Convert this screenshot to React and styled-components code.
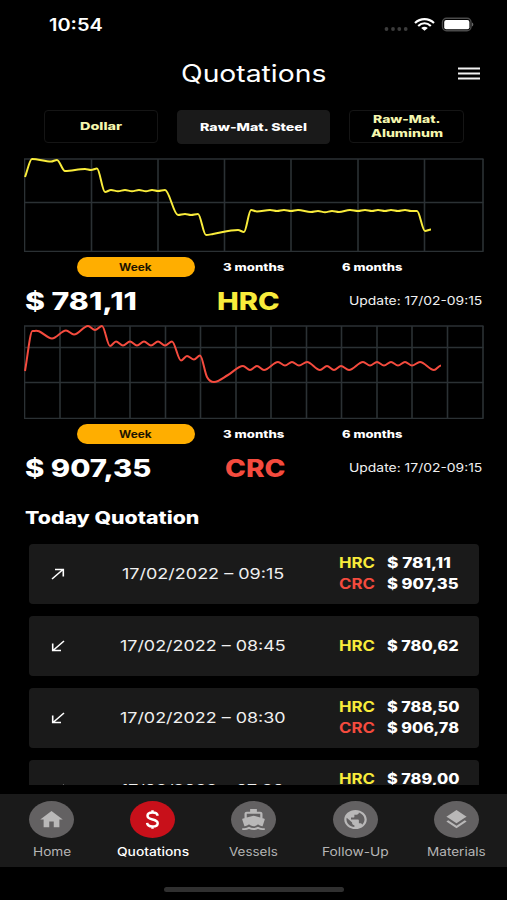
import React, { useLayoutEffect, useRef } from 'react';
import styled, { createGlobalStyle, css } from 'styled-components';
import { MdHome, MdDirectionsBoat, MdPublic, MdLayers } from 'react-icons/md';

const GlobalStyle = createGlobalStyle`
  * {
    box-sizing: border-box;
  }

  body {
    margin: 0;
    background: #000;
    font-family: Inter, 'Liberation Sans', sans-serif;
    color: #fff;
  }
`;

const Screen = styled.div`
  display: flex;
  flex-direction: column;
  width: 507px;
  height: 900px;
  overflow: hidden;
  background: #000;
`;

const FitBox = styled.span`
  display: block;
  flex: none;
  width: ${({ $width }) => $width}px;
  white-space: nowrap;
  text-align: left;
  line-height: 1;
  font-size: ${({ $size }) => $size}px;
  font-weight: ${({ $weight }) => $weight};
  color: ${({ $color }) => $color};
`;

const FitInner = styled.span`
  display: inline-block;
  transform-origin: 0 50%;
`;

// Stretches a line of text sideways until it fills the given width
const FitText = ({ width, size, weight = 400, color = '#fff', children }) => {
  const inner = useRef(null);

  useLayoutEffect(() => {
    const fit = () => {
      const el = inner.current;
      if (el) el.style.transform = `scaleX(${width / el.offsetWidth})`;
    };
    fit();
    document.fonts?.ready.then(fit);
  }, [width, children]);

  return (
    <FitBox $width={width} $size={size} $weight={weight} $color={color}>
      <FitInner ref={inner}>{children}</FitInner>
    </FitBox>
  );
};

const StatusBar = styled.div`
  display: flex;
  align-items: center;
  justify-content: space-between;
  height: 48px;
  padding: 2px 31px 0 49px;
`;

const StatusIcons = styled.div`
  display: flex;
  align-items: center;
`;

const Header = styled.header`
  display: grid;
  grid-template-columns: 1fr auto 1fr;
  align-items: center;
  height: 51px;
  padding: 0 27px 0 26px;
`;

const MenuButton = styled.button`
  display: flex;
  justify-self: end;
  padding: 0;
  border: 0;
  background: none;
`;

const Tabs = styled.nav`
  display: flex;
  align-items: flex-start;
  gap: 19px;
  height: 59px;
  padding: 11px 43px 0 43.5px;
`;

const Tab = styled.button`
  display: flex;
  flex-direction: column;
  align-items: center;
  justify-content: center;
  gap: 3px;
  width: 115px;
  height: 33px;
  padding: 0;
  border: 1px solid #151515;
  border-radius: 4px;
  background: #000;
  font-family: inherit;

  ${({ $active }) => $active && css`
    width: 153px;
    height: 34px;
    border-color: #1a1a1a;
    background: #1a1a1a;
  `}
`;

const Quote = styled.section`
  height: 167px;
  padding-left: 24px;
`;

const Chart = styled.svg`
  display: block;
  fill: none;
`;

const Periods = styled.div`
  display: flex;
  height: 20px;
  margin: 5px 0 0 52.5px;
`;

const Period = styled.button`
  display: flex;
  align-items: center;
  justify-content: center;
  width: 118.5px;
  height: 20px;
  padding: 0;
  border: 0;
  border-radius: 10px;
  background: ${({ $active }) => ($active ? '#ffae00' : 'transparent')};
  font-family: inherit;
`;

const PriceRow = styled.div`
  display: grid;
  grid-template-columns: 192px 1fr auto;
  align-items: center;
  height: 48px;
  padding: 2px 25px 0 1px;
`;

const Symbol = styled.div`
  padding-left: ${({ $indent }) => $indent}px;
`;

const ListTitle = styled.h2`
  display: flex;
  align-items: center;
  height: 51.5px;
  margin: 0;
  padding: 2px 0 0 24.5px;
`;

const List = styled.div`
  display: flex;
  flex-direction: column;
  gap: 11.5px;
  height: 241.5px;
  padding: 0 28.5px 0 29px;
  overflow: hidden;
`;

const Card = styled.article`
  display: grid;
  grid-template-columns: 57px 1fr 139px;
  align-items: center;
  flex: none;
  height: 60.5px;
  border-radius: 4px;
  background: #1a1a1a;
`;

const CardArrow = styled.svg`
  display: block;
  margin-left: 22px;
  fill: none;
  stroke: #fff;
  stroke-width: 1.6;
`;

const CardDate = styled.div`
  display: flex;
  justify-content: center;
  padding-right: 20px;
`;

const CardPrices = styled.div`
  display: flex;
  flex-direction: column;
  gap: 7px;
  margin-left: -0.5px;
`;

const CardPrice = styled.div`
  display: flex;
  gap: 12px;
`;

const BottomNav = styled.nav`
  display: grid;
  grid-template-columns: repeat(5, 101.2px);
  height: 73px;
  margin-top: 9px;
  padding-left: 1px;
  background: #1a1a1a;
`;

const NavItem = styled.a`
  display: flex;
  flex-direction: column;
  align-items: center;
  gap: 9px;
  padding-top: 6.5px;
`;

const NavIcon = styled.span`
  display: flex;
  align-items: center;
  justify-content: center;
  width: 45px;
  height: 37px;
  border-radius: 50%;
  background: ${({ $active }) => ($active ? '#c8101a' : '#636162')};
  color: #b9b8b8;

  svg {
    width: 27px;
    height: 23px;
  }
`;

const HomeIndicator = styled.div`
  width: 180px;
  height: 5px;
  margin: 20px auto 0;
  border-radius: 3px;
  background: #303030;
`;

const SERIES = {
  HRC: {
    color: '#f9ec3b',
    columns: [0.5, 67.5, 134, 200.5, 267, 334, 400.5, 459],
    rows: [1, 44.5, 93.5],
    points: [[1, 19], [8, 1], [27, 3.6], [33, 2], [41, 13], [61, 11], [67, 12], [73, 10.5], [81, 34], [87, 32], [94, 33.2], [101, 32], [108, 33.2], [115, 32], [122, 33.2], [128, 32], [134, 33], [141, 32], [154, 57], [161, 56], [167, 57], [174, 56], [182, 77], [189, 76], [214, 72], [220, 74], [227, 52], [233, 53.5], [246, 52], [253, 53], [260, 52], [267, 53], [274, 52], [287, 54], [294, 53], [301, 54.2], [308, 53], [315, 54], [326, 52], [334, 53], [341, 52], [348, 53], [354, 52], [361, 53], [367, 52], [374, 53], [381, 52], [387, 53], [393, 53], [401, 73], [407, 71.5]],
  },
  CRC: {
    color: '#f54b3e',
    columns: [0.5, 36, 71, 106, 141.5, 176.5, 212, 247, 282.5, 317.5, 353, 388, 423.5, 459],
    rows: [1, 22.5, 57.5, 93.5],
    points: [[1, 46], [8.5, 6], [15, 6.2], [28, 13.5], [42, 5.5], [50, 9.5], [64, 1], [71, 5], [78, 1], [86, 21], [92, 16.5], [99, 20.5], [106, 16.5], [113, 20.5], [120, 16.5], [127, 20.5], [134, 16.5], [141, 20.5], [148, 16.5], [157, 35.5], [163, 31], [170, 34.5], [176, 30.5], [183, 52], [190, 57], [204, 50], [219, 41], [226, 45], [233, 41], [240, 45], [254, 37], [261, 40.5], [268, 37], [275, 40.5], [283, 37], [296, 45], [303, 41], [310, 45], [317, 41], [325, 45], [339, 37], [346, 40.5], [353, 37], [360, 40.5], [367, 37], [374, 40.5], [381, 37], [388, 40.5], [396, 37], [410, 45], [417, 40.5]],
  },
};

const PERIODS = [
  { label: 'Week', width: 33 },
  { label: '3 months', width: 62 },
  { label: '6 months', width: 61 },
];

const QUOTES = [
  { symbol: 'HRC', price: '$ 781,11', width: 112, symbolWidth: 63, indent: 0 },
  { symbol: 'CRC', price: '$ 907,35', width: 127, symbolWidth: 61, indent: 8 },
];

const HISTORY = [
  { up: true, date: '17/02/2022 – 09:15', dateWidth: 162, prices: [['HRC', '$ 781,11', 64], ['CRC', '$ 907,35', 71]] },
  { date: '17/02/2022 – 08:45', dateWidth: 165, prices: [['HRC', '$ 780,62', 72]] },
  { date: '17/02/2022 – 08:30', dateWidth: 165, prices: [['HRC', '$ 788,50', 72], ['CRC', '$ 906,78', 72]] },
  { date: '17/02/2022 – 07:30', dateWidth: 163, prices: [['HRC', '$ 789,00', 72], ['CRC', '$ 907,00', 72]] },
];

const DollarIcon = () => (
  <svg viewBox="0 0 26 22" fill="none" stroke="#fff" strokeWidth="2.4">
    <path d="M18 7.4C17.7 5.2 15.8 4.2 13 4.2S8.2 5.4 8.2 7.4c0 2.4 2.3 3 4.8 3.6s5 1.2 5 3.6c0 2-2 3.2-5 3.2s-5-1.2-5.200-3.500M13 2v2.500M13 17.500V20" />
  </svg>
);

const NAV = [
  { label: 'Home', width: 38, icon: <MdHome preserveAspectRatio="none" /> },
  { label: 'Quotations', width: 72, icon: <DollarIcon />, active: true },
  { label: 'Vessels', width: 49, icon: <MdDirectionsBoat preserveAspectRatio="none" /> },
  { label: 'Follow-Up', width: 67, icon: <MdPublic preserveAspectRatio="none" /> },
  { label: 'Materials', width: 59, icon: <MdLayers preserveAspectRatio="none" /> },
];

// Smooth curve through every point, flat at each peak and dip
const curve = (points) => {
  const slope = points.map((p, i) => {
    const prev = points[i - 1];
    const next = points[i + 1];
    if (!prev || !next) return 0;
    if ((p[1] - prev[1]) * (next[1] - p[1]) <= 0) return 0;
    return (next[1] - prev[1]) / (next[0] - prev[0]);
  });
  slope[0] = (points[1][1] - points[0][1]) / (points[1][0] - points[0][0]);
  return points.slice(1).reduce((d, [x, y], i) => {
    const [px, py] = points[i];
    const dx = (x - px) / 3;
    return `${d}C${px + dx} ${py + slope[i] * dx} ${x - dx} ${y - slope[i + 1] * dx} ${x} ${y}`;
  }, `M${points[0][0]} ${points[0][1]}`);
};

const PriceChart = ({ symbol }) => {
  const { color, columns, rows, points } = SERIES[symbol];
  return (
    <Chart width="460" height="94" viewBox="0 0 460 94">
      <g stroke="#2b3134" strokeWidth="1.6">
        {columns.map((x) => <line key={x} x1={x} x2={x} y1="1" y2="93.5" />)}
        {rows.map((y) => <line key={y} x1="0" x2="459.5" y1={y} y2={y} />)}
      </g>
      <path d={curve(points)} stroke={color} strokeWidth="2" strokeLinejoin="round" />
    </Chart>
  );
};

const App = () => (
  <>
    <GlobalStyle />
    <Screen>
      <StatusBar>
        <FitText width={54} size={17} weight={600}>10:54</FitText>
        <StatusIcons>
          <svg width="92" height="16" viewBox="0 0 92 16">
            <g fill="#3c3c3c">
              <circle cx="2.5" cy="12" r="1.9" />
              <circle cx="9" cy="12" r="1.9" />
              <circle cx="15.3" cy="12" r="1.9" />
              <circle cx="21.7" cy="12" r="1.9" />
            </g>
            <g fill="none" stroke="#fff" strokeWidth="2.2">
              <path d="M31 6C36.500 0.900 44.500 0.900 50 6" />
              <path d="M34.200 9C38 5.600 43 5.600 46.800 9" />
            </g>
            <path d="M37.200 11c2-1.600 4.600-1.600 6.600 0L40.500 13.800z" fill="#fff" />
            <rect x="58.500" y="1.300" width="28.500" height="12.500" rx="4" fill="none" stroke="#4a4a4a" strokeWidth="1.400" />
            <rect x="60.200" y="3" width="25.200" height="9.200" rx="2" fill="#fff" />
            <path d="M88 5.500v4c1.800-.700 1.800-3.300 0-4z" fill="#666" />
          </svg>
        </StatusIcons>
      </StatusBar>

      <Header>
        <span />
        <FitText width={145} size={24}>Quotations</FitText>
        <MenuButton aria-label="Menu">
          <svg width="22" height="13" viewBox="0 0 22 13" fill="#f2f2f2">
            <rect y="0.5" width="22" height="2" />
            <rect y="5.5" width="22" height="2" />
            <rect y="10.5" width="22" height="2" />
          </svg>
        </MenuButton>
      </Header>

      <Tabs>
        <Tab>
          <FitText width={42} size={11} weight={800} color="#f5f7ae">Dollar</FitText>
        </Tab>
        <Tab $active>
          <FitText width={107} size={11} weight={800}>Raw-Mat. Steel</FitText>
        </Tab>
        <Tab>
          <FitText width={67} size={11} weight={800} color="#f5f7ae">Raw-Mat.</FitText>
          <FitText width={72} size={11} weight={800} color="#f5f7ae">Aluminum</FitText>
        </Tab>
      </Tabs>

      {QUOTES.map(({ symbol, price, width, symbolWidth, indent }) => (
        <Quote key={symbol}>
          <PriceChart symbol={symbol} />
          <Periods>
            {PERIODS.map((period, i) => (
              <Period key={period.label} $active={i === 0}>
                <FitText width={period.width} size={10} weight={i === 0 ? 700 : 800} color={i === 0 ? '#1c1400' : '#fff'}>
                  {period.label}
                </FitText>
              </Period>
            ))}
          </Periods>
          <PriceRow>
            <FitText width={width} size={24} weight={800}>{price}</FitText>
            <Symbol $indent={indent}>
              <FitText width={symbolWidth} size={24} weight={800} color={SERIES[symbol].color}>{symbol}</FitText>
            </Symbol>
            <FitText width={133} size={11.5} color="#f0f0f0">Update: 17/02-09:15</FitText>
          </PriceRow>
        </Quote>
      ))}

      <ListTitle>
        <FitText width={174} size={17} weight={800}>Today Quotation</FitText>
      </ListTitle>

      <List>
        {HISTORY.map(({ up, date, dateWidth, prices }) => (
          <Card key={date}>
            <CardArrow width="14" height="12" viewBox="0 0 14 12">
              <path d={up ? 'M1 11L12 1.5M4 1.5H12.3V8.5' : 'M13 1L2 10.5M10 10.5H1.7V3.5'} />
            </CardArrow>
            <CardDate>
              <FitText width={dateWidth} size={14} color="#f0f0f0">{date}</FitText>
            </CardDate>
            <CardPrices>
              {prices.map(([symbol, price, width]) => (
                <CardPrice key={symbol}>
                  <FitText width={36} size={14} weight={700} color={SERIES[symbol].color}>{symbol}</FitText>
                  <FitText width={width} size={14} weight={800}>{price}</FitText>
                </CardPrice>
              ))}
            </CardPrices>
          </Card>
        ))}
      </List>

      <BottomNav>
        {NAV.map(({ label, width, icon, active }) => (
          <NavItem key={label}>
            <NavIcon $active={active}>{icon}</NavIcon>
            <FitText width={width} size={11.5} weight={active ? 500 : 400} color={active ? '#fff' : '#b5b5b5'}>{label}</FitText>
          </NavItem>
        ))}
      </BottomNav>
      <HomeIndicator />
    </Screen>
  </>
);

export default App;
